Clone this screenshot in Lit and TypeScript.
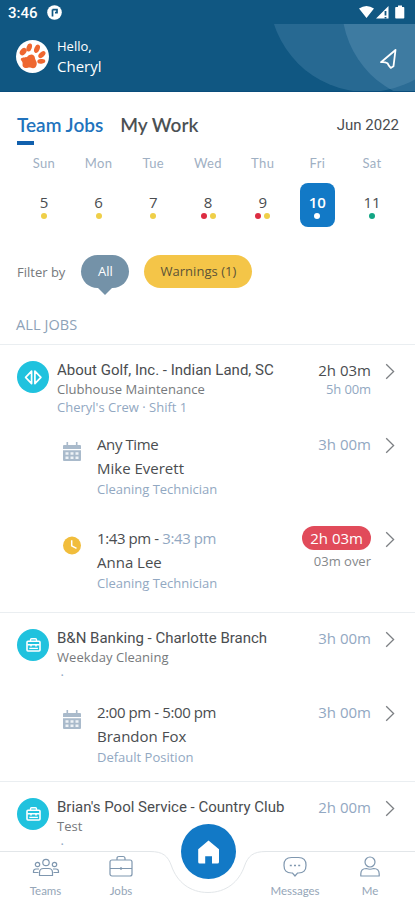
import { LitElement, html, css, svg, nothing } from "lit";
import { customElement, property } from "lit/decorators.js";
import { classMap } from "lit/directives/class-map.js";

interface Shift { icon: "calendar" | "clock"; start: string; end?: string; name: string; role: string; time: string; over?: string; }
interface Job { icon: "diamond" | "case"; title: string; sub: string; note: string; time: string; planned?: string; worked?: boolean; shifts: Shift[]; }

const DAYS = [
  { day: "Sun", date: 5, dots: ["yellow"] },
  { day: "Mon", date: 6, dots: ["yellow"] },
  { day: "Tue", date: 7, dots: ["yellow"] },
  { day: "Wed", date: 8, dots: ["red", "yellow"] },
  { day: "Thu", date: 9, dots: ["red", "yellow"] },
  { day: "Fri", date: 10, dots: ["white"], selected: true },
  { day: "Sat", date: 11, dots: ["green"] },
];

const JOBS: Job[] = [
  {
    icon: "diamond", title: "About Golf, Inc. - Indian Land, SC", sub: "Clubhouse Maintenance",
    note: "Cheryl's Crew · Shift 1", time: "2h 03m", planned: "5h 00m", worked: true,
    shifts: [
      { icon: "calendar", start: "Any Time", name: "Mike Everett", role: "Cleaning Technician", time: "3h 00m" },
      { icon: "clock", start: "1:43 pm - ", end: "3:43 pm", name: "Anna Lee", role: "Cleaning Technician", time: "2h 03m", over: "03m over" },
    ],
  },
  {
    icon: "case", title: "B&N Banking - Charlotte Branch", sub: "Weekday Cleaning", note: " ·", time: "3h 00m",
    shifts: [{ icon: "calendar", start: "2:00 pm - 5:00 pm", name: "Brandon Fox", role: "Default Position", time: "3h 00m" }],
  },
  { icon: "case", title: "Brian's Pool Service - Country Club", sub: "Test", note: " ·", time: "2h 00m", shifts: [] },
];

const chevron = html`<svg class="chev" width="10" height="17" viewBox="0 0 10 17"><path d="M1.2 1.2 8.6 8.5 1.2 15.8" fill="none" stroke="#7c7f83" stroke-width="1.3"/></svg>`;

const calendar = html`<svg width="18" height="19" viewBox="0 0 18 19">
  <path d="M1 3h16a1 1 0 0 1 1 1v3H0V4a1 1 0 0 1 1-1zM0 8.2h18V18a1 1 0 0 1-1 1H1a1 1 0 0 1-1-1z" fill="#a9bacb"/>
  <path d="M4.3 0v4M13.7 0v4" stroke="#a9bacb" stroke-width="1.6"/>
  <path d="M2.5 10.3h3v2.4h-3zM7.5 10.3h3v2.4h-3zM12.5 10.3h3v2.4h-3zM2.5 14.6h3V17h-3zM7.5 14.6h3V17h-3zM12.5 14.6h3V17h-3z" fill="#eef2f6"/>
</svg>`;

const clock = html`<svg width="18" height="19" viewBox="0 0 18 19"><circle cx="9" cy="9.5" r="9" fill="#f1bd3c"/><path d="M8.7 4.2v5.6l4.8 2.6" fill="none" stroke="#fff" stroke-width="1.5"/></svg>`;

const diamond = html`<svg width="32" height="32" viewBox="0 0 32 32"><circle cx="16" cy="16" r="16" fill="#20c2de"/>
  <path d="M14.6 10.2v12.4L8.6 16.4zM17.9 10.2v12.4l6-6.2z" fill="none" stroke="#fff" stroke-width="1.7" stroke-linejoin="round"/></svg>`;

const briefcase = html`<svg width="32" height="32" viewBox="0 0 32 32"><circle cx="16" cy="16" r="16" fill="#20c2de"/>
  <path d="M13.5 12v-1.200q0-1 1-1h4q1 0 1 1V12" fill="none" stroke="#fff" stroke-width="1.4"/>
  <rect x="10" y="12.2" width="13" height="9.8" rx="1" fill="none" stroke="#fff" stroke-width="1.6"/>
  <path d="M10.4 15.800h12.200M14 15.800v1.600M19 15.800v1.600" fill="none" stroke="#fff" stroke-width="1.600"/><path d="M12.3 19.4h8.6" stroke="#fff" stroke-width="1.3"/></svg>`;

const pad = (x: number, y: number, rx: number, ry: number, a: number) =>
  svg`<ellipse cx=${x} cy=${y} rx=${rx} ry=${ry} transform="rotate(${a} ${x} ${y})" fill="#ee6730"/>`;

const paw = html`<svg width="33" height="33" viewBox="0 0 33 33"><circle cx="16.5" cy="16.5" r="16.5" fill="#fff"/>
  ${pad(7.2, 11.6, 2.9, 4.1, 40)}${pad(13.2, 7.5, 2.6, 4.1, 18)}${pad(21, 8.8, 2.6, 4.4, 22)}${pad(25.9, 14.6, 2.5, 4.2, 48)}${pad(25.3, 21.4, 2.3, 4, 85)}
  <path d="M5 18.600c2-1.900 4.800-.8 6.500-2.200 1.700-1.500 4.200-2.500 6-1.200 1.700 1.200 1.200 3.100 2.100 4.800.9 1.800 1.600 3.300.9 5.300-.6 1.700-1.600 3-3.500 3-1.900 0-2.800-1.100-5-.6-2.300.4-4.300.4-5.200-1.500-.7-1.600.3-2.700-.5-4.300-.5-1.100-2.200-2.200-1.300-3.300z" fill="#ee6730"/></svg>`;

@customElement("job-card")
class JobCard extends LitElement {
  @property({ attribute: false }) job!: Job;

  static styles = css`
    :host { display: block; flex-shrink: 0; border-top: 1px solid #eaeef1; padding: 15px 20px 14px 17px; font-family: "Open Sans", "Noto Sans", sans-serif; color: #4a4d50; }
    .row { display: flex; align-items: flex-start; }
    .badge { width: 32px; height: 32px; margin: 1px 8px 0 0; }
    .badge svg, .mark svg { display: block; }
    .main { flex: 1; min-width: 0; }
    .title, .sub, .note, .when, .who, .role { white-space: pre; }
    .title { font: 15px/20px Roboto, sans-serif; }
    .sub { font-size: 13px; line-height: 18px; color: #76797c; letter-spacing: 0.05px; }
    .note { font-size: 13px; line-height: 18px; height: 18px; color: #92a8c2; }
    .side { display: flex; flex-direction: column; align-items: flex-end; width: 76px; margin-right: 14px; white-space: nowrap; color: #92a8c2; }
    .time { font-size: 15px; line-height: 20px; }
    .dark { color: #4a4d50; }
    .planned { font-size: 13px; line-height: 18px; letter-spacing: -0.1px; }
    .chev { display: block; margin-top: 3px; }
    .shifts { display: flex; flex-direction: column; gap: 29px; padding-top: 18px; }
    .shift { height: 65px; }
    .warned { margin-bottom: 5px; }
    .mark { width: 18px; margin: 8px 16px 0 46px; }
    .when { font-size: 15px; line-height: 21px; letter-spacing: -0.4px; }
    .end { color: #92a8c2; }
    .who { font-size: 15px; line-height: 22px; margin-top: 2px; }
    .role { font-size: 13px; line-height: 20px; color: #92a8c2; }
    .pill { background: #e14b5a; color: #fff; border-radius: 12px; height: 24px; line-height: 24px; padding: 0 8px; font-size: 15px; margin-top: -2px; }
    .over { font-size: 13px; line-height: 22px; color: #85888b; }
  `;

  private shift(s: Shift) {
    return html`<div class=${classMap({ row: true, shift: true, warned: !!s.over })}>
      <div class="mark">${s.icon === "clock" ? clock : calendar}</div>
      <div class="main">
        <div class="when">${s.start}${s.end ? html`<span class="end">${s.end}</span>` : nothing}</div>
        <div class="who">${s.name}</div>
        <div class="role">${s.role}</div>
      </div>
      <div class="side">
        ${s.over ? html`<div class="pill">${s.time}</div><div class="over">${s.over}</div>` : html`<div class="time">${s.time}</div>`}
      </div>
      ${chevron}
    </div>`;
  }

  render() {
    const j = this.job;
    return html`<div class="row">
        <div class="badge">${j.icon === "diamond" ? diamond : briefcase}</div>
        <div class="main">
          <div class="title">${j.title}</div>
          <div class="sub">${j.sub}</div>
          <div class="note">${j.note}</div>
        </div>
        <div class="side">
          <div class=${classMap({ time: true, dark: !!j.worked })}>${j.time}</div>
          ${j.planned ? html`<div class="planned">${j.planned}</div>` : nothing}
        </div>
        ${chevron}
      </div>
      ${j.shifts.length ? html`<div class="shifts">${j.shifts.map((s) => this.shift(s))}</div>` : nothing}`;
  }
}

@customElement("nav-bar")
class NavBar extends LitElement {
  static styles = css`
    :host { display: block; position: absolute; left: 0; right: 0; bottom: 0; height: 76px; font-family: Lato, sans-serif; }
    .back { position: absolute; inset: 0; }
    .items { position: relative; display: grid; grid-template-columns: 91px 60px 114px 60px 90px; height: 76px; }
    .item { display: flex; flex-direction: column; align-items: center; padding-top: 31px; font-size: 11.5px; line-height: 16px; color: #95a6b8; }
    .item svg { display: block; margin-bottom: 4px; }
    .messages { margin: 0 -5px; }
    .home svg { display: block; margin-left: 29.5px; }
  `;

  render() {
    return html`<svg class="back" width="415" height="76" viewBox="0 0 415 76">
        <path d="M-2 27.5H150C163 27.5 168 32 171.5 42C177 58 190 68.500 208 68.500S239 58 244.500 42C248 32 253 27.500 266 27.500H417V80H-2z" fill="#fff" stroke="#e2e6e9"/>
      </svg>
      <div class="items">
        <div class="item"><svg width="28" height="24" viewBox="0 0 28 24" fill="none" stroke="#7f97af" stroke-width="1.2">
            <circle cx="14" cy="7.5" r="3.2"/><path d="M7.5 20.500v-3q0-4 4-4h5q4 0 4 4v3z"/>
            <circle cx="5.5" cy="9.5" r="2.2"/><circle cx="22.5" cy="9.5" r="2.2"/>
            <path d="M6.500 17.500h-5v-1q0-2.500 2.500-2.500h3M21.500 17.500h5v-1q0-2.500-2.500-2.500h-3"/></svg>Teams</div>
        <div class="item"><svg width="24" height="24" viewBox="0 0 24 24" fill="none" stroke="#7f97af" stroke-width="1.2">
            <rect x="1" y="5" width="22" height="16" rx="2"/><path d="M8 5V3.500q0-2 2-2h4q2 0 2 2V5M1 13.500h22M12 12v3"/></svg>Jobs</div>
        <div class="home"><svg width="55" height="55" viewBox="0 0 55 55"><circle cx="27.5" cy="27.5" r="27.5" fill="#1279c6"/>
            <path d="M27.500 16.500 38 25.200V38q0 1.600-1.600 1.600H31v-7.400h-6.800v7.400h-5.400q-1.600 0-1.600-1.600V25.200z" fill="#fff"/></svg></div>
        <div class="item messages"><svg width="24" height="24" viewBox="0 0 24 24" fill="none" stroke="#7f97af" stroke-width="1.2">
            <path d="M8.500 2.500h7q7.500 0 7.500 7.500v.5q0 7.500-7.500 7.500h-1L12 21l-2.500-3h-1Q1 18 1 10.500V10q0-7.500 7.500-7.500z"/>
            <path d="M6.800 10.500h2M11 10.500h2M15.200 10.500h2" stroke-width="1.5"/></svg>Messages</div>
        <div class="item"><svg width="24" height="24" viewBox="0 0 24 24" fill="none" stroke="#7f97af" stroke-width="1.2">
            <circle cx="12" cy="7" r="5"/><path d="M2.800 21v-2q0-5.500 5.500-5.500 3.700 1.500 7.400 0 5.500 0 5.500 5.500v2z" stroke-linejoin="round"/></svg>Me</div>
      </div>`;
  }
}

@customElement("app-root")
class AppRoot extends LitElement {
  static styles = css`
    :host { display: flex; flex-direction: column; position: relative; height: 900px; width: 415px; overflow: hidden; background: #fff; font-family: "Open Sans", "Noto Sans", sans-serif; color: #4a4d50; }
    .header, .tabs, .week, .filters, .heading { flex-shrink: 0; }
    .header { position: relative; height: 92px; background: #105782; color: #fff; box-sizing: border-box; border-bottom: 1px solid #0a4d7c; }
    .rings { position: absolute; left: 0; top: 24px; }
    .status { display: flex; align-items: center; height: 24px; padding: 1px 10px 0 8px; box-sizing: border-box; font: 500 15px/24px Roboto, sans-serif; }
    .status span { margin-right: 9.5px; }
    .status .sys { margin-left: auto; }
    .user { position: relative; display: flex; align-items: center; height: 67px; padding: 0 17px 2px 16px; box-sizing: border-box; }
    .greet { margin: -2px auto 0 8px; font-size: 13px; line-height: 20px; }
    .name { font-size: 15px; }
    .plane { margin-top: 4px; }
    .tabs { display: flex; align-items: center; height: 32px; padding: 17px 16px 0 17px; font: 600 19px/32px Lato, sans-serif; }
    .tab { margin-right: 17px; position: relative; color: #4c5154; }
    .active { color: #2173bd; }
    .active::after { content: ""; position: absolute; left: 0; top: 32px; width: 17px; height: 3.5px; background: #1160ad; }
    .month { margin-left: auto; font: 15px/32px Roboto, sans-serif; }
    .week { display: grid; grid-template-columns: repeat(7, 54.7px); margin: 12px 0 0 16.6px; text-align: center; }
    .dow { font: 13px/20px Lato, sans-serif; color: #9fb0c3; letter-spacing: 0.4px; }
    .date { width: 35px; height: 44px; margin: 10px auto 0; border-radius: 8px; font-size: 15px; line-height: 38px; }
    .selected { background: #1279c6; color: #fff; font-weight: 600; }
    .dots { display: flex; justify-content: center; gap: 3px; margin-top: -8px; }
    .dot { width: 6px; height: 6px; border-radius: 50%; }
    .yellow { background: #efcf48; } .red { background: #dc2c42; } .white { background: #fff; } .green { background: #12a584; }
    .filters { display: flex; align-items: center; margin: 28px 0 0 17px; height: 33px; font-size: 13px; color: #76797c; }
    .all { position: relative; width: 48px; height: 33px; line-height: 33px; margin-left: 16px; border-radius: 17px; background: #7492a8; color: #fff; text-align: center; }
    .all::after { content: ""; position: absolute; left: 15px; top: 31px; border: 9px solid transparent; border-top-color: #7492a8; border-bottom: 0; }
    .warn { margin-left: 15px; padding: 0 16px; line-height: 33px; border-radius: 17px; background: #f4c548; color: #5c5337; letter-spacing: 0.05px; }
    .heading { margin: 27px 0 0 16px; font-size: 14.5px; line-height: 20px; height: 29px; color: #8da2b8; letter-spacing: 0.1px; }
  `;

  render() {
    return html`
      <div class="header">
        <svg class="rings" width="415" height="67" viewBox="0 24 415 67" fill="#9cc3e0"><circle cx="367" cy="-5.6" r="97.6" fill-opacity="0.17"/><circle cx="438" cy="6" r="96" fill-opacity="0.2"/></svg>
        <div class="status"><span>3:46</span>
          <svg width="15" height="15" viewBox="0 0 15 15"><circle cx="7.5" cy="7.5" r="7.3" fill="#fff"/><path d="M5.500 11.500V4.500M5.500 4.700h4.500v3H8" fill="none" stroke="#105782" stroke-width="1.7"/></svg>
          <svg class="sys" width="46" height="15" viewBox="0 0 46 15"><path d="M0 3.500Q7.500-1.700 15 3.500L7.500 13z M17 13.500 29.500 1v12.500z" fill="#fff"/><path d="M26.500 6v4.500M26.500 12v1.500" stroke="#105782" stroke-width="1.8"/><path d="M37 2h2V.5h4V2h1.500q.8 0 .8.800v10q0 .8-.8.800H37q-.8 0-.8-.8v-10q0-.8.8-.8z" fill="#fff"/></svg>
        </div>
        <div class="user">${paw}
          <div class="greet">Hello,<div class="name">Cheryl</div></div>
          <svg class="plane" width="19" height="22" viewBox="0 0 19 22"><path d="M16.500 2 2 14.200q3.500-.6 6.500 1 1 2.500 3.200 4.700l2.800-1.700z" fill="none" stroke="#fff" stroke-width="1.8" stroke-linejoin="round"/></svg>
        </div>
      </div>
      <div class="tabs"><div class="tab active">Team Jobs</div><div class="tab">My Work</div><div class="month">Jun 2022</div></div>
      <div class="week">${DAYS.map((d) => html`<div>
          <div class="dow">${d.day}</div>
          <div class=${classMap({ date: true, selected: !!d.selected })}>${d.date}
            <div class="dots">${d.dots.map((c) => html`<div class="dot ${c}"></div>`)}</div></div>
        </div>`)}</div>
      <div class="filters">Filter by<div class="all">All</div><div class="warn">Warnings (1)</div></div>
      <div class="heading">ALL JOBS</div>
      ${JOBS.map((j) => html`<job-card .job=${j}></job-card>`)}
      <nav-bar></nav-bar>`;
  }
}
